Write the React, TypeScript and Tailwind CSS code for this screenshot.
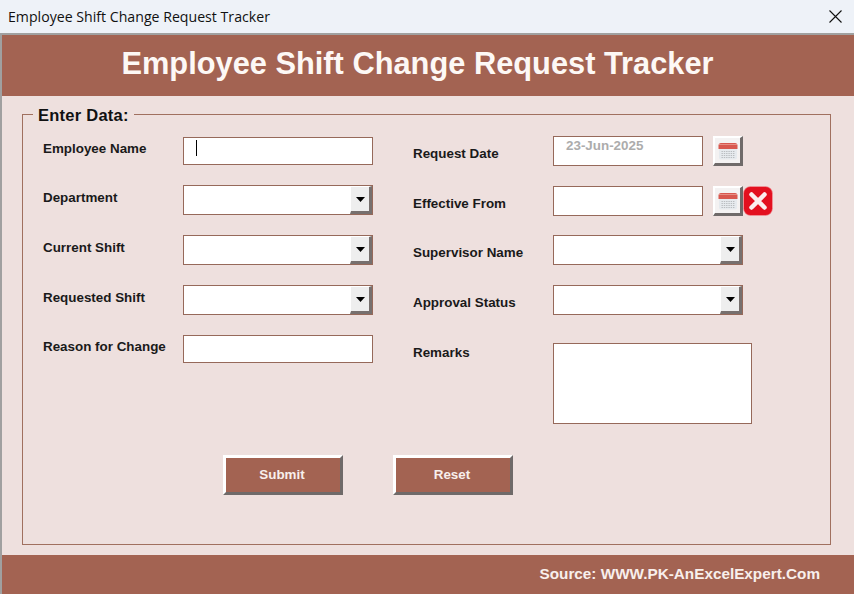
const BROWN = 'bg-[#a36352]';

function Label({ text, className }: { text: string; className: string }) {
  return <div className={`text-[13.4px] leading-4 font-bold text-[#1a1a1a] ${className}`}>{text}</div>;
}

function TextField({ className, value, caret }: { className: string; value?: string; caret?: boolean }) {
  return (
    <div className={`relative border border-[#96695a] bg-white ${className}`}>
      {value && <span className="ml-3 block text-[13.4px] leading-4 font-bold text-[#acacac] mt-px">{value}</span>}
      {caret && <span className="absolute left-3 top-[2px] h-4 w-px bg-black" />}
    </div>
  );
}

function Dropdown() {
  return (
    <div className="flex h-[30px] w-[190px] justify-end border border-[#96695a] bg-white">
      <div className="flex w-[22px] items-center justify-center border-t border-l border-white border-r-[3px] border-b-[3px] border-r-[#77706e] border-b-[#77706e] bg-[#eeeeee]">
        <svg width="9" height="5" viewBox="0 0 9 5"><path d="M0 0h9L4.500 5z" fill="#000" /></svg>
      </div>
    </div>
  );
}

function CalendarButton({ className }: { className?: string }) {
  return (
    <div className={`flex h-[30px] w-[30px] shrink-0 items-center justify-center border-t-2 border-l-2 border-white border-r-[3px] border-b-[3px] border-r-[#6f6a69] border-b-[#6f6a69] bg-[#f4f2f2] ${className ?? ''}`}>
      <svg width="20" height="20" viewBox="0 0 20 20">
        <rect x="1" y="3" width="18" height="15.500" rx="2" fill="#e6eaee" />
        <path d="M0.500 8V4.500Q0.500 2 3 2h14Q19.500 2 19.500 4.500V8z" fill="#d8584f" />
        <path d="M1 3.500h18" stroke="#eb9b92" strokeWidth="0.800" />
        <path d="M3.500 10.500h13M3.500 12.500h13M3.500 14.500h13M3.500 16.500h13" stroke="#b9bdc0" strokeWidth="1.100" strokeDasharray="1.400 0.900" />
      </svg>
    </div>
  );
}

function CloseIcon() {
  return (
    <svg width="30" height="30" viewBox="0 0 30 30" className="shrink-0">
      <rect x="0.500" y="0.500" width="29" height="29" rx="7" fill="#e3101f" stroke="#f3a0a4" strokeWidth="0.600" />
      <path d="M8.500 8.500l13 13M21.500 8.500l-13 13" stroke="#fbeeee" strokeWidth="4.500" strokeLinecap="round" />
    </svg>
  );
}

function SubmitButton({ text }: { text: string }) {
  return (
    <button className={`h-10 w-[120px] border-t-[3px] border-l-[3px] border-white border-r-[3px] border-b-[3px] border-r-[#6f6a69] border-b-[#6f6a69] pr-[2px] ${BROWN} text-[13.4px] font-bold text-[#f8efec]`}>
      {text}
    </button>
  );
}

export default function App() {
  return (
    <div className="flex h-[594px] w-[854px] flex-col overflow-hidden bg-[#eee0de] font-['Liberation_Sans',Arial,sans-serif]">
      {/* Window title */}
      <div className="flex h-[33px] shrink-0 items-center justify-between bg-[#eef2f8] pr-3 pl-2 font-['Open_Sans',sans-serif] text-[14.150px] text-[#111]">
        <span>Employee Shift Change Request Tracker</span>
        <svg width="13" height="13" viewBox="0 0 13 13"><path d="M0.500 0.500l12 12M12.500 0.500l-12 12" stroke="#111" strokeWidth="1.100" /></svg>
      </div>

      <div className="flex min-h-0 flex-1 flex-col border-t-2 border-l-2 border-[#a0a0a0]">
        <div className={`flex h-[61px] shrink-0 items-center justify-center pr-[21px] pb-[3px] ${BROWN} text-[30.800px] font-bold text-[#fdf8f5]`}>
          Employee Shift Change Request Tracker
        </div>

        <div className="min-h-0 flex-1 px-5 pt-[10px]">
          <fieldset className="h-[439px] w-[809px] border border-[#a0705f] pl-5">
            <legend className="-ml-[10px] translate-y-px px-[5px] text-[16.500px] leading-4 font-bold tracking-[0.25px] text-[#111]">Enter Data:</legend>

            <div className="flex h-[333px] pt-[13px]">
              {/* Left column */}
              <div className="w-[370px]">
                <div className="flex h-[50px] items-start">
                  <Label text="Employee Name" className="mt-[6px] w-[140px]" />
                  <TextField className="mt-[2px] h-[28px] w-[190px]" caret />
                </div>
                <div className="flex h-[50px] items-start">
                  <Label text="Department" className="mt-[5px] w-[140px]" />
                  <Dropdown />
                </div>
                <div className="flex h-[50px] items-start">
                  <Label text="Current Shift" className="mt-[5px] w-[140px]" />
                  <Dropdown />
                </div>
                <div className="flex h-[50px] items-start">
                  <Label text="Requested Shift" className="mt-[5px] w-[140px]" />
                  <Dropdown />
                </div>
                <div className="flex h-[50px] items-start">
                  <Label text="Reason for Change" className="mt-[4px] w-[140px]" />
                  <TextField className="h-[28px] w-[190px]" />
                </div>
              </div>

              {/* Right column */}
              <div className="flex-1">
                <div className="flex h-[50px] items-start">
                  <Label text="Request Date" className="mt-[11px] w-[140px]" />
                  <TextField className="mt-[1px] h-[30px] w-[150px]" value="23-Jun-2025" />
                  <CalendarButton className="mt-[1px] ml-[10px]" />
                </div>
                <div className="flex h-[50px] items-start">
                  <Label text="Effective From" className="mt-[11px] w-[140px]" />
                  <TextField className="mt-[1px] h-[30px] w-[150px]" />
                  <CalendarButton className="mt-[1px] ml-[10px]" />
                  <div className="mt-[1px]"><CloseIcon /></div>
                </div>
                <div className="flex h-[50px] items-start">
                  <Label text="Supervisor Name" className="mt-[10px] w-[140px]" />
                  <Dropdown />
                </div>
                <div className="flex h-[50px] items-start">
                  <Label text="Approval Status" className="mt-[10px] w-[140px]" />
                  <Dropdown />
                </div>
                <div className="flex items-start">
                  <Label text="Remarks" className="mt-[10px] w-[140px]" />
                  <TextField className="mt-[8px] h-[81px] w-[199px]" />
                </div>
              </div>
            </div>

            <div className="ml-[180px] flex gap-[50px]">
              <SubmitButton text="Submit" />
              <SubmitButton text="Reset" />
            </div>
          </fieldset>
        </div>

        <div className={`flex h-[39px] shrink-0 items-center justify-end pr-[34px] ${BROWN} text-[15.300px] font-bold text-[#f8efec]`}>
          Source: WWW.PK-AnExcelExpert.Com
        </div>
      </div>
    </div>
  );
}
